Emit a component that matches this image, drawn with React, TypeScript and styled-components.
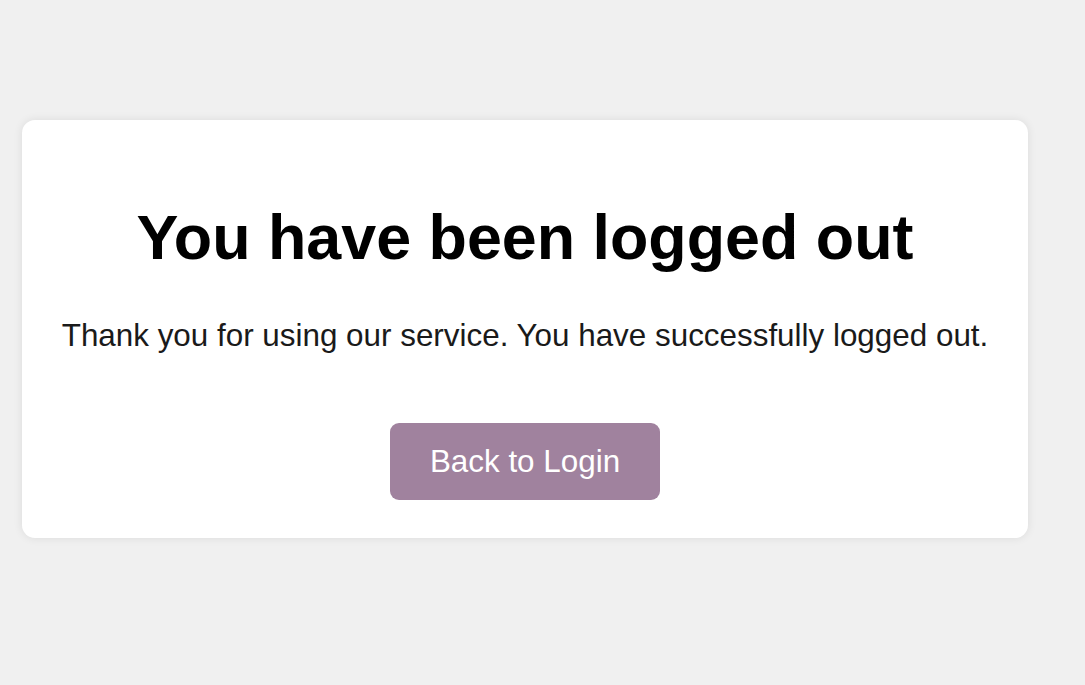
import React from "react";
import styled, { createGlobalStyle } from "styled-components";

const GlobalStyle = createGlobalStyle`
  html, body {
    margin: 0;
    padding: 0;
    background: #f0f0f0;
    font-family: "Liberation Sans", Arial, sans-serif;
  }
`;

const Page = styled.div`
  min-height: 685px;
  box-sizing: border-box;
  padding: 120px 0 0 22px;
`;

const Card = styled.main`
  box-sizing: border-box;
  width: 1006px;
  height: 418px;
  padding-top: 80px;
  background: #ffffff;
  border-radius: 13px;
  box-shadow: 0 0 10px rgba(0, 0, 0, 0.09);
  display: flex;
  flex-direction: column;
  align-items: center;
`;

const Title = styled.h1`
  margin: 0;
  font-size: 62.8px;
  line-height: 75px;
  font-weight: 700;
  color: #000;
  white-space: nowrap;
`;

const Message = styled.p`
  margin: 42px 0 0;
  font-size: 31.4px;
  line-height: 37px;
  color: #1a1a1a;
  white-space: nowrap;
`;

const LoginButton = styled.button`
  margin-top: 69px;
  box-sizing: border-box;
  height: 77px;
  padding: 0 40px;
  border: none;
  border-radius: 9px;
  background: #a0829e;
  color: #ffffff;
  font-family: "Liberation Sans", Arial, sans-serif;
  font-size: 31.4px;
  line-height: 77px;
  cursor: pointer;
`;

export default function App() {
  return (
    <>
      <GlobalStyle />
      <Page>
        <Card>
          <Title>You have been logged out</Title>
          <Message>Thank you for using our service. You have successfully logged out.</Message>
          <LoginButton>Back to Login</LoginButton>
        </Card>
      </Page>
    </>
  );
}
